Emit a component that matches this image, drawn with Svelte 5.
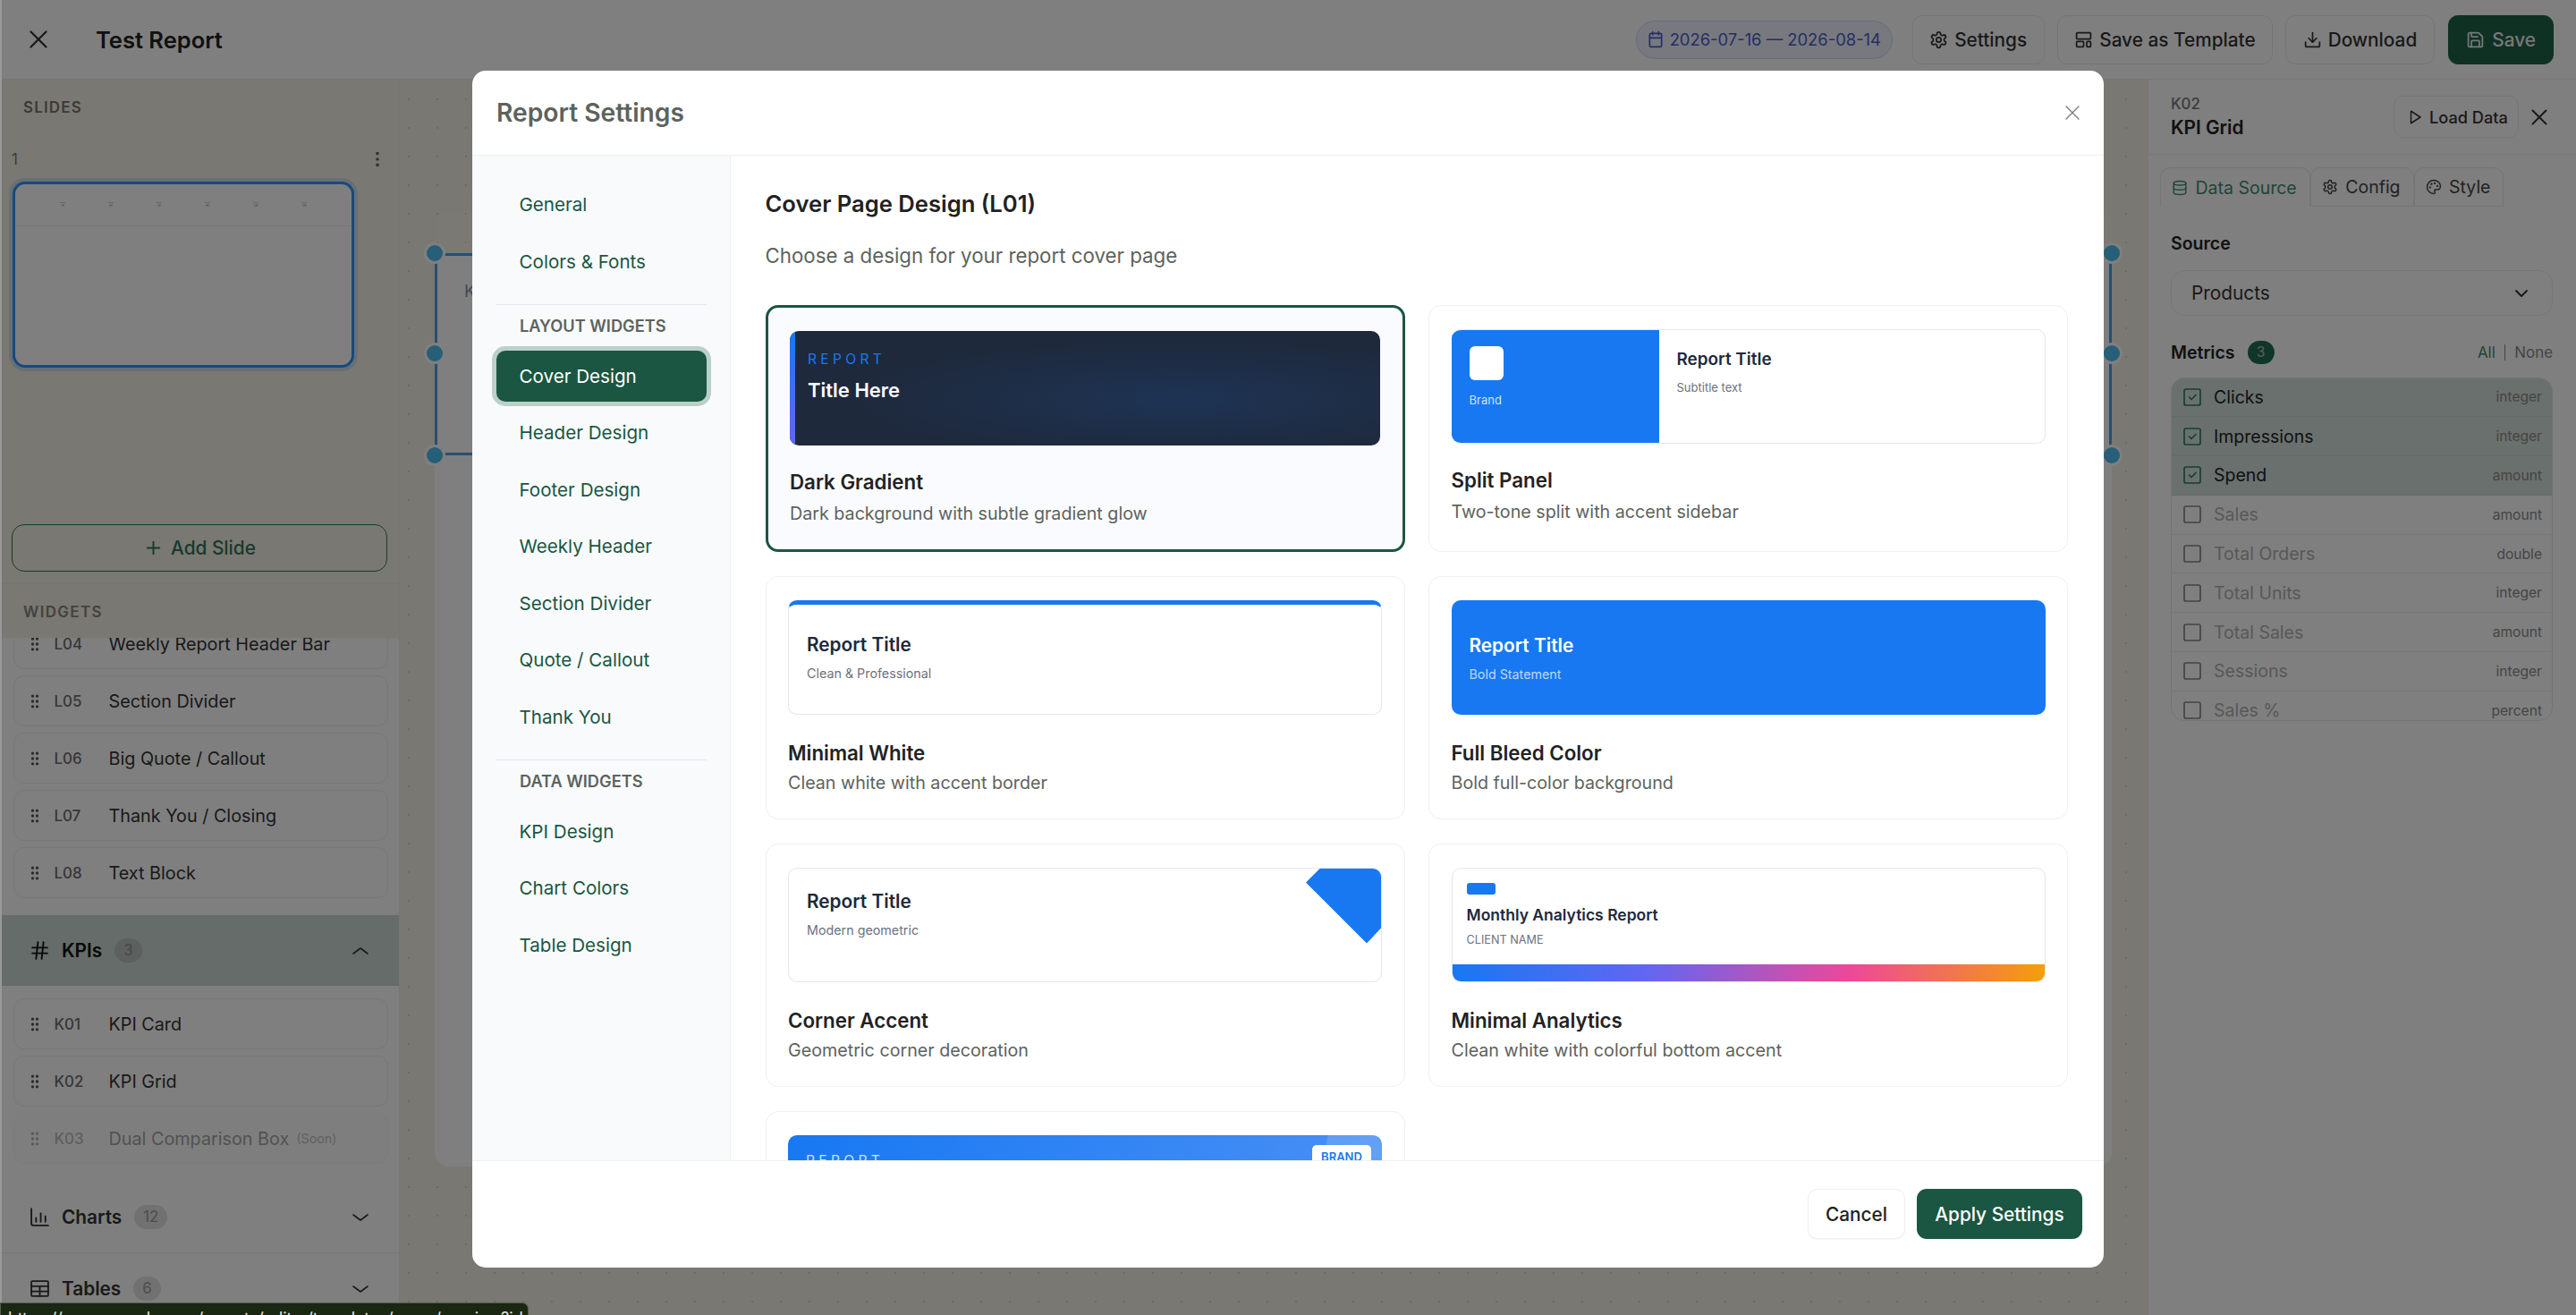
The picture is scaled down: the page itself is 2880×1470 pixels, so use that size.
<script>
  const ic = {
    x: '<path d="M18 6 6 18"/><path d="m6 6 12 12"/>',
    calendar: '<rect x="4" y="4" width="16" height="18" rx="2"/><path d="M16 2v4"/><path d="M8 2v4"/><path d="M4 10h16"/>',
    gear: '<path d="M12.22 2h-.44a2 2 0 0 0-2 2v.18a2 2 0 0 1-1 1.73l-.43.25a2 2 0 0 1-2 0l-.15-.08a2 2 0 0 0-2.73.73l-.22.38a2 2 0 0 0 .73 2.73l.15.1a2 2 0 0 1 1 1.72v.51a2 2 0 0 1-1 1.74l-.15.09a2 2 0 0 0-.73 2.73l.22.38a2 2 0 0 0 2.73.73l.15-.08a2 2 0 0 1 2 0l.43.25a2 2 0 0 1 1 1.73V20a2 2 0 0 0 2 2h.44a2 2 0 0 0 2-2v-.18a2 2 0 0 1 1-1.73l.43-.25a2 2 0 0 1 2 0l.15.08a2 2 0 0 0 2.73-.73l.22-.39a2 2 0 0 0-.73-2.73l-.15-.08a2 2 0 0 1-1-1.74v-.5a2 2 0 0 1 1-1.74l.15-.09a2 2 0 0 0 .73-2.73l-.22-.38a2 2 0 0 0-2.73-.73l-.15.08a2 2 0 0 1-2 0l-.43-.25a2 2 0 0 1-1-1.73V4a2 2 0 0 0-2-2z"/><circle cx="12" cy="12" r="3"/>',
    template: '<rect x="3" y="3" width="18" height="8" rx="1"/><rect x="3" y="14" width="9" height="7" rx="1"/><rect x="16" y="14" width="5" height="7" rx="1"/>',
    download: '<path d="M21 15v4a2 2 0 0 1-2 2H5a2 2 0 0 1-2-2v-4"/><path d="m7 10 5 5 5-5"/><path d="M12 15V3"/>',
    save: '<path d="M15.2 3a2 2 0 0 1 1.4.6l3.8 3.8a2 2 0 0 1 .6 1.4V19a2 2 0 0 1-2 2H5a2 2 0 0 1-2-2V5a2 2 0 0 1 2-2z"/><path d="M17 21v-7a1 1 0 0 0-1-1H8a1 1 0 0 0-1 1v7"/><path d="M7 3v4a1 1 0 0 0 1 1h7"/>',
    play: '<path d="M6 3 20 12 6 21z"/>',
    db: '<ellipse cx="12" cy="5" rx="9" ry="3"/><path d="M3 5v14a9 3 0 0 0 18 0V5"/><path d="M3 12a9 3 0 0 0 18 0"/>',
    palette: '<path d="M12 22a1 1 0 0 1 0-20 10 9 0 0 1 10 9 5 5 0 0 1-5 5h-2.25a1.75 1.75 0 0 0-1.4 2.8l.3.4a1.75 1.75 0 0 1-1.4 2.8z"/><circle cx="13.5" cy="6.5" r=".6" fill="currentColor"/><circle cx="17.5" cy="10.5" r=".6" fill="currentColor"/><circle cx="6.5" cy="12.5" r=".6" fill="currentColor"/><circle cx="8.5" cy="7.5" r=".6" fill="currentColor"/>',
    hash: '<path d="M4 9h16"/><path d="M4 15h16"/><path d="M10 3 8 21"/><path d="M16 3l-2 18"/>',
    chart: '<path d="M3 3v16a2 2 0 0 0 2 2h16"/><path d="M8 17v-4"/><path d="M13 17V8"/><path d="M18 17v-6"/>',
    table: '<rect x="3" y="4" width="18" height="16" rx="1"/><path d="M3 9.5h18"/><path d="M3 15h18"/><path d="M12 9.5V20"/>',
    down: '<path d="m4 9 8 6 8-6"/>',
    up: '<path d="m4 15 8-6 8 6"/>',
    chev: '<path d="m6 9 6 6 6-6"/>',
    check: '<rect x="3" y="3" width="18" height="18" rx="2"/><path d="m8.5 12 2.5 2.5 5-5"/>',
    box: '<rect x="3" y="3" width="18" height="18" rx="2"/>',
    plus: '<path d="M5 12h14"/><path d="M12 5v14"/>',
    more: '<circle cx="12" cy="5" r="1" fill="currentColor"/><circle cx="12" cy="12" r="1" fill="currentColor"/><circle cx="12" cy="19" r="1" fill="currentColor"/>',
    grip: '<circle cx="9" cy="5" r="1" fill="currentColor"/><circle cx="15" cy="5" r="1" fill="currentColor"/><circle cx="9" cy="12" r="1" fill="currentColor"/><circle cx="15" cy="12" r="1" fill="currentColor"/><circle cx="9" cy="19" r="1" fill="currentColor"/><circle cx="15" cy="19" r="1" fill="currentColor"/>'
  };

  const layoutWidgets = [
    ['L05', 'Section Divider'], ['L06', 'Big Quote / Callout'], ['L07', 'Thank You / Closing'], ['L08', 'Text Block']
  ];
  const metrics = [
    ['Clicks', 'integer', true], ['Impressions', 'integer', true], ['Spend', 'amount', true],
    ['Sales', 'amount', false], ['Total Orders', 'double', false], ['Total Units', 'integer', false],
    ['Total Sales', 'amount', false], ['Sessions', 'integer', false], ['Sales %', 'percent', false]
  ];
  const navLayout = ['Cover Design', 'Header Design', 'Footer Design', 'Weekly Header', 'Section Divider', 'Quote / Callout', 'Thank You'];
  const navData = ['KPI Design', 'Chart Colors', 'Table Design'];
</script>

{#snippet icon(name, size, sw = 2)}
  <svg class="i" width={size} height={size} viewBox="0 0 24 24" fill="none" stroke="currentColor" stroke-width={sw} stroke-linecap="round" stroke-linejoin="round">{@html ic[name]}</svg>
{/snippet}

{#snippet widget(code, name, off = false, soon = false)}
  <div class="wi" class:off>
    <span class="grip">{@render icon('grip', 20)}</span>
    <span class="wcode">{code}</span>
    <span class="wname">{name}</span>
    {#if soon}<span class="soon">(Soon)</span>{/if}
  </div>
{/snippet}

<div class="app">
  <header class="top">
    <span class="top-x">{@render icon('x', 34, 1.6)}</span>
    <h1>Test Report</h1>
    <div class="top-actions">
      <div class="date">{@render icon('calendar', 20)}<span>2026-07-16 — 2026-08-14</span></div>
      <div class="tbtn">{@render icon('gear', 21)}<span>Settings</span></div>
      <div class="tbtn">{@render icon('template', 21)}<span>Save as Template</span></div>
      <div class="tbtn">{@render icon('download', 21)}<span>Download</span></div>
      <div class="tbtn primary">{@render icon('save', 21)}<span>Save</span></div>
    </div>
  </header>

  <div class="main">
    <aside class="side">
      <section class="slides">
        <div class="plabel">SLIDES</div>
        <div class="slide-row"><span>1</span><span class="more">{@render icon('more', 22)}</span></div>
        <div class="thumb">
          <div class="thumb-head">
            {#each ['7K', '5K', '3K', '9K', '14K', '12K'] as t}<span class="tk"><i></i>{t}</span>{/each}
          </div>
        </div>
        <div class="add">{@render icon('plus', 23)}<span>Add Slide</span></div>
      </section>
      <div class="wlabel">WIDGETS</div>
      <div class="wlist">
        <div class="wgroup first">
          {@render widget('L04', 'Weekly Report Header Bar')}
          {#each layoutWidgets as w}{@render widget(w[0], w[1])}{/each}
        </div>
        <div class="cat open">
          <span class="cat-i">{@render icon('hash', 25, 1.8)}</span><b>KPIs</b><em>3</em>
          <span class="cat-c">{@render icon('up', 24, 1.6)}</span>
        </div>
        <div class="wgroup kp">
          {@render widget('K01', 'KPI Card')}
          {@render widget('K02', 'KPI Grid')}
          {@render widget('K03', 'Dual Comparison Box', true, true)}
        </div>
        <div class="cat">
          <span class="cat-i">{@render icon('chart', 25, 1.8)}</span><b>Charts</b><em>12</em>
          <span class="cat-c">{@render icon('down', 24, 1.6)}</span>
        </div>
        <div class="cat">
          <span class="cat-i">{@render icon('table', 25, 1.8)}</span><b>Tables</b><em>6</em>
          <span class="cat-c">{@render icon('down', 24, 1.6)}</span>
        </div>
      </div>
    </aside>

    <div class="canvas">
      <div class="page">
        <div class="sel">
          <span class="h tl"></span><span class="h ml"></span><span class="h bl"></span>
          <span class="h tr"></span><span class="h mr"></span><span class="h br"></span>
          <div class="sel-t">KPI Grid</div>
        </div>
      </div>
    </div>

    <aside class="right">
      <div class="r-head">
        <div class="r-t"><small>K02</small><strong>KPI Grid</strong></div>
        <div class="load">{@render icon('play', 18)}<span>Load Data</span></div>
        <span class="r-x">{@render icon('x', 30, 1.6)}</span>
      </div>
      <div class="tabs">
        <div class="tab active">{@render icon('db', 18)}<span>Data Source</span></div>
        <div class="tab">{@render icon('gear', 18)}<span>Config</span></div>
        <div class="tab">{@render icon('palette', 18)}<span>Style</span></div>
      </div>
      <div class="r-body">
        <div class="flabel">Source</div>
        <div class="select"><span>Products</span>{@render icon('chev', 24)}</div>
        <div class="mhead">
          <span class="flabel">Metrics</span><span class="mbadge">3</span>
          <span class="links"><span class="all">All</span><i></i><span>None</span></span>
        </div>
        <div class="mlist">
          {#each metrics as m}
            <div class="mrow" class:on={m[2]}>
              <span class="cb">{@render icon(m[2] ? 'check' : 'box', 24, 1.7)}</span>
              <span class="mname">{m[0]}</span>
              <span class="mtype">{m[1]}</span>
            </div>
          {/each}
        </div>
      </div>
    </aside>
  </div>

  <div class="overlay">
    <div class="modal">
      <div class="m-head">
        <h2>Report Settings</h2>
        <span class="m-x">{@render icon('x', 28, 1.2)}</span>
      </div>
      <div class="m-body">
        <nav class="m-nav">
          <a href="#g">General</a>
          <a href="#c">Colors &amp; Fonts</a>
          <hr />
          <div class="ngroup">LAYOUT WIDGETS</div>
          {#each navLayout as n, i}<a href="#l" class:active={i === 0}>{n}</a>{/each}
          <hr />
          <div class="ngroup">DATA WIDGETS</div>
          {#each navData as n}<a href="#d">{n}</a>{/each}
        </nav>
        <div class="m-main">
          <h3>Cover Page Design (L01)</h3>
          <p class="lead">Choose a design for your report cover page</p>
          <div class="grid">
            <div class="card selected">
              <div class="pv dark"><span class="bar"></span><div class="kick">REPORT</div><div class="dtitle">Title Here</div></div>
              <div class="ct">Dark Gradient</div><div class="cd">Dark background with subtle gradient glow</div>
            </div>
            <div class="card">
              <div class="pv split">
                <div class="sl"><span class="logo"></span><small>Brand</small></div>
                <div class="sr"><div class="rt">Report Title</div><div class="rs">Subtitle text</div></div>
              </div>
              <div class="ct">Split Panel</div><div class="cd">Two-tone split with accent sidebar</div>
            </div>
            <div class="card">
              <div class="pv plain top-accent"><div class="rt big">Report Title</div><div class="rs mid">Clean &amp; Professional</div></div>
              <div class="ct">Minimal White</div><div class="cd">Clean white with accent border</div>
            </div>
            <div class="card">
              <div class="pv full"><div class="rt big">Report Title</div><div class="rs mid">Bold Statement</div></div>
              <div class="ct">Full Bleed Color</div><div class="cd">Bold full-color background</div>
            </div>
            <div class="card">
              <div class="pv plain corner"><span class="gem"></span><div class="rt big">Report Title</div><div class="rs mid">Modern geometric</div></div>
              <div class="ct">Corner Accent</div><div class="cd">Geometric corner decoration</div>
            </div>
            <div class="card">
              <div class="pv analytics">
                <span class="alogo"></span>
                <div class="at">Monthly Analytics Report</div>
                <div class="as">CLIENT NAME</div>
                <span class="rainbow"></span>
              </div>
              <div class="ct">Minimal Analytics</div><div class="cd">Clean white with colorful bottom accent</div>
            </div>
            <div class="card">
              <div class="pv banner"><span class="glow"></span><div class="kick w">REPORT</div><span class="brand">BRAND</span></div>
              <div class="ct">Gradient Banner</div><div class="cd">Bold banner with brand badge</div>
            </div>
          </div>
        </div>
      </div>
      <div class="m-foot">
        <div class="btn cancel">Cancel</div>
        <div class="btn apply">Apply Settings</div>
      </div>
    </div>
  </div>

  <span class="edge"></span>
  <div class="status">https://app.example.com/reports/editor/templates/cover/preview?id=10#slide-1</div>
</div>

<style>
  :global(body) { margin: 0; background: #fff; }
  :global(*) { box-sizing: border-box; }
  .i { display: block; flex: none; }

  .app {
    position: relative;
    width: 2880px;
    height: 1470px;
    overflow: hidden;
    display: flex;
    flex-direction: column;
    font-family: Inter, "Liberation Sans", sans-serif;
    color: #222;
    background: #fff;
  }

  .top {
    height: 89px;
    flex: none;
    display: flex;
    align-items: center;
    border-bottom: 1px solid #ececec;
    padding: 0 25px 0 26px;
  }
  .top-x { color: #333; margin-right: 47px; }
  .top h1 { margin: 0; font-size: 25.5px; font-weight: 600; color: #222; }
  .top-actions { margin-left: auto; display: flex; align-items: center; gap: 14px; }
  .date {
    height: 43px; width: 287px; margin-right: 8px;
    display: flex; align-items: center; gap: 6px; padding-left: 11px;
    border: 1.5px solid #cdd8f8; border-radius: 22px;
    background: #eef3ff; color: #4c5cc9; font-size: 18.4px;
    white-space: nowrap;
  }
  .tbtn {
    height: 55px; display: flex; align-items: center; gap: 7px; padding: 0 18.5px;
    border: 1.5px solid #eceae6; border-radius: 11px; background: #fff;
    font-size: 20.8px; font-weight: 500; color: #333; white-space: nowrap;
  }
  .tbtn.primary { background: #1c6349; border-color: #1c6349; color: #eee; gap: 8px; padding: 0 19px; margin-left: 1.5px; }

  .main { flex: 1; min-height: 0; display: flex; }

  .side {
    width: 447px; flex: none; padding-left: 2px;
    display: flex; flex-direction: column;
    background: #f4f0e4;
    border-right: 1px solid #efece2;
  }
  .slides {
    height: 564px; flex: none; display: flex; flex-direction: column;
    border-bottom: 1px solid #ebe8dd; padding-bottom: 13px;
  }
  .plabel { margin: 21px 0 0 24px; font-size: 16.9px; font-weight: 600; letter-spacing: 1.2px; line-height: 20px; color: #757570; }
  .slide-row {
    display: flex; align-items: center; justify-content: space-between;
    margin: 38px 0 0 11px; padding-right: 13px; height: 20px;
    font-size: 16.9px; color: #777;
  }
  .more { color: #666; }
  .thumb {
    width: 382px; height: 208px; margin: 15px 0 0 12px;
    border: 3px solid #2c94ff; border-radius: 14px; background: #fff;
    box-shadow: 0 0 0 4px rgba(44, 148, 255, .18);
  }
  .thumb-head { height: 47px; border-bottom: 1px solid #f0f0f0; display: flex; justify-content: space-around; align-items: center; padding: 0 26px; }
  .tk { font-size: 3px; color: #8890a8; display: flex; flex-direction: column; align-items: center; gap: 1px; }
  .tk i { width: 6px; height: 1px; background: #ccd; display: block; }
  .add {
    margin: auto 0 0 11px; width: 420px; height: 53px;
    display: flex; align-items: center; justify-content: center; gap: 8px;
    border: 1.5px solid #30755e; border-radius: 14px; color: #30755e;
    font-size: 20.8px; font-weight: 500;
  }
  .wlabel {
    height: 60px; flex: none; padding: 21px 0 0 24px;
    font-size: 16.9px; line-height: 20px; font-weight: 600; letter-spacing: 1.4px; color: #86867f;
  }
  .wlist { flex: 1; min-height: 0; overflow: hidden; background: #fff; margin-left: -2px; padding-left: 2px; }
  .wgroup { display: flex; flex-direction: column; gap: 7px; padding: 0 12.5px; }
  .wgroup.first { margin-top: -22px; padding-bottom: 19px; }
  .wgroup.kp { padding-top: 14px; padding-bottom: 20px; }
  .wi {
    height: 57px; display: flex; align-items: center; flex: none;
    border: 1.5px solid #eeeeee; border-radius: 12px;
  }
  .grip { width: 45px; padding-left: 13px; color: #555; }
  .wcode { width: 61px; font-size: 16.9px; font-weight: 500; color: #6e6e6e; }
  .wname { font-size: 19.8px; color: #333; }
  .soon { font-size: 14.3px; color: #777; margin-left: 8px; }
  .wi.off { opacity: .45; background: #fafafa; }
  .cat {
    height: 80px; display: flex; align-items: center; padding-left: 30px;
    border-bottom: 1.5px solid #efefef;
  }
  .cat.open { height: 79px; background: #cad8d2; border-bottom: 0; color: #111; }
  .cat-i { width: 37px; color: #333; }
  .cat b { font-size: 20.8px; font-weight: 600; color: #333; }
  .cat.open b { color: #111; }
  .cat.open .cat-i { color: #111; }
  .cat em {
    margin-left: 14px; padding: 0 10px; height: 27px; line-height: 27px; border-radius: 14px;
    background: #e2e2e2; font-style: normal; font-size: 16.9px; color: #999;
  }
  .cat.open em { background: #b8c0bc; color: #8a908d; }
  .cat-c { margin-left: auto; margin-right: 31px; color: #333; }

  .canvas {
    flex: 1; min-width: 0; padding: 146px 0 0 39px;
    background-color: #f4f0e4;
    background-image: radial-gradient(circle, #d8d5ca 1px, transparent 1.5px);
    background-size: 32px 32px;
    background-position: -6px 6px;
  }
  .page {
    width: 1875px; height: 1069px; border-radius: 16px; padding-top: 48px;
    background: linear-gradient(180deg, rgba(255, 255, 255, .2) 48px, #fff 48px);
  }
  .sel { position: relative; height: 226px; border: 3px solid #4f9fe0; padding: 28px 30px; }
  .sel-t { font-size: 19px; color: #8890a0; }
  .h { position: absolute; width: 18px; height: 18px; border-radius: 50%; background: #4fbcf0; box-shadow: 0 0 0 3px #fff; }
  .tl { left: -12px; top: -12px; } .ml { left: -12px; top: 100px; } .bl { left: -12px; bottom: -12px; }
  .tr { right: -12px; top: -12px; } .mr { right: -12px; top: 100px; } .br { right: -12px; bottom: -12px; }

  .right { width: 479px; flex: none; background: #fff; border-left: 1px solid #eee; }
  .r-head { height: 84px; display: flex; align-items: center; padding: 0 26px 0 25px; border-bottom: 1px solid #eee; }
  .r-t { display: flex; flex-direction: column; gap: 4px; margin-right: auto; }
  .r-t small { font-size: 16.9px; font-weight: 500; color: #777; line-height: 20px; }
  .r-t strong { font-size: 20.8px; font-weight: 600; color: #222; line-height: 26px; }
  .load {
    width: 140px; height: 47px; display: flex; align-items: center; gap: 7px; padding-left: 14px;
    border: 1.5px solid #ececec; border-radius: 11px; font-size: 18.2px; font-weight: 500; color: #333; white-space: nowrap;
  }
  .r-x { margin-left: 8px; color: #333; }
  .tabs { display: flex; padding: 14px 0 0 13px; height: 58px; }
  .tab {
    display: flex; align-items: center; gap: 8.5px; padding: 0 14px 0 12px;
    border: 1.5px solid #eaeaea; border-radius: 11px 11px 0 0; font-size: 19.5px; color: #444;
  }
  .tab.active { border-bottom: 0; color: #3e8a70; }
  .r-body { padding: 29px 26px 0 25px; }
  .flabel { font-size: 19.5px; font-weight: 600; color: #222; line-height: 24px; }
  .select {
    margin-top: 18px; height: 51px; display: flex; align-items: center; justify-content: space-between;
    padding: 0 22px; border: 1.5px solid #ececec; border-radius: 15px; font-size: 20.8px; color: #333;
  }
  .mhead { display: flex; align-items: center; margin-top: 28px; height: 26px; }
  .mbadge { margin-left: 14px; width: 30px; height: 26px; line-height: 26px; border-radius: 13px; text-align: center; background: #216d53; color: #bbb; font-size: 15.6px; }
  .links { margin-left: auto; display: flex; align-items: center; gap: 10px; font-size: 16.9px; color: #8a8a8a; }
  .links .all { color: #3d8a70; }
  .links i { width: 1.5px; height: 18px; background: #888; display: block; }
  .mlist { margin-top: 14.5px; height: 384px; overflow: hidden; border: 1.5px solid #e8e8e8; border-radius: 15px; }
  .mrow { height: 43.8px; display: flex; align-items: center; padding: 0 11px; border-bottom: 1px solid #eee; color: #b0b0b0; }
  .mrow.on { background: #d4e0dc; color: #222; border-bottom-color: #c9d6d1; }
  .cb { width: 36px; color: #888; }
  .mrow.on .cb { color: #2a7f63; }
  .mname { font-size: 19.5px; color: inherit; }
  .mtype { margin-left: auto; font-size: 15.6px; color: #8a8a8a; }

  .overlay {
    position: absolute; inset: 0; padding-top: 79px;
    display: flex; justify-content: center; align-items: flex-start;
    background: rgba(0, 0, 0, .5);
  }
  .modal {
    width: 1824px; height: 1338px; background: #fff; border-radius: 15px; overflow: hidden;
    display: flex; flex-direction: column;
  }
  .m-head { height: 95px; flex: none; display: flex; align-items: center; justify-content: space-between; padding: 0 21px 0 27px; border-bottom: 1.5px solid #eeeff1; }
  .m-head h2 { margin: 0; font-size: 28.2px; font-weight: 600; color: #5d635c; }
  .m-x { color: #7b7b7b; }
  .m-body { flex: 1; min-height: 0; display: flex; }
  .m-nav { width: 289px; flex: none; background: #f8fafc; border-right: 1.5px solid #eeeff1; padding: 26px 26px 0 27px; display: flex; flex-direction: column; gap: 6.5px; }
  .m-nav a {
    height: 57px; flex: none; display: flex; align-items: center; padding-left: 25.5px; border-radius: 10px;
    font-size: 20.6px; color: #1a5641; text-decoration: none;
  }
  .m-nav a.active { background: #1a5641; color: #fff; box-shadow: 0 0 0 5px #bccfc9; }
  .m-nav hr { margin: 13px 0 0; border: 0; border-top: 1.5px solid #e6e8ec; width: 100%; }
  .ngroup { height: 37.5px; padding: 3.5px 0 0 26px; font-size: 18.2px; line-height: 26px; font-weight: 600; color: #5d635c; flex: none; }
  .m-main { flex: 1; min-width: 0; overflow: hidden; padding: 36px 40px 0 38.5px; }
  .m-main h3 { margin: 0; font-size: 25.6px; font-weight: 600; line-height: 36px; color: #222; }
  .lead { margin: 22px 0 37px; font-size: 22.3px; line-height: 36px; color: #5d635c; }
  .grid { display: grid; grid-template-columns: 1fr 1fr; gap: 27px 26.5px; }
  .card { border: 1.5px solid #eeeff1; border-radius: 14px; padding: 25.5px 24.5px; background: #fff; }
  .card.selected { border: 3.5px solid #1a5641; background: #fafbff; }
  .ct { margin-top: 27px; font-size: 22.3px; font-weight: 600; line-height: 32px; color: #222; }
  .cd { margin-top: 3px; font-size: 19.7px; line-height: 29px; color: #5d635c; }
  .card:nth-child(-n+2) .ct { margin-top: 25px; }
  .card:nth-child(-n+2) .cd { margin-top: 5px; }

  .pv { position: relative; height: 128px; border-radius: 10px; overflow: hidden; display: flex; flex-direction: column; }
  .rt { font-size: 18.9px; font-weight: 600; color: #1e293b; line-height: 26px; }
  .rs { margin-top: 8px; font-size: 13px; line-height: 20px; color: #6b7280; }
  .rt.big { font-size: 20.8px; }
  .rs.mid { font-size: 14.3px; margin-top: 9px; }

  .dark { background: radial-gradient(ellipse at 66% 60%, #1e3354 0%, #1e293b 62%); padding: 20px 0 0 20px; }
  .bar { position: absolute; left: 0; top: 0; bottom: 0; width: 6px; background: linear-gradient(180deg, #1778f2, #6366f1); }
  .kick { font-size: 15.6px; line-height: 24px; letter-spacing: 4.3px; color: #1778f2; }
  .dtitle { margin-top: 8px; font-size: 22px; font-weight: 600; line-height: 28px; color: #fff; }

  .split { flex-direction: row; border: 1.5px solid #e5e7eb; border-left: 0; }
  .sl { width: 232px; margin: -1.5px 0; background: #1778f2; padding: 20px; }
  .logo { display: block; width: 38px; height: 38px; border-radius: 6px; background: #fff; }
  .sl small { display: block; margin-top: 13px; font-size: 13px; line-height: 18px; color: rgba(255, 255, 255, .8); }
  .sr { padding: 20px; }
  .sr .rt { line-height: 26px; }

  .plain { border: 1.5px solid #e5e7eb; padding: 0 0 0 20px; }
  .plain .rt { margin-top: 24px; }
  .plain.top-accent { border-top: 5px solid #1778f2; }
  .plain.top-accent .rt { margin-top: 32px; }
  .full { background: #1778f2; padding-left: 20px; }
  .full .rt { color: #fff; margin-top: 38px; }
  .full .rs { color: rgba(255, 255, 255, .72); margin-top: 9px; }
  .gem { position: absolute; right: 0; top: 0; width: 84px; height: 84px; background: #1778f2; clip-path: polygon(0 16px, 16px 0, 100% 0, 100% 67px, 68px 100%); }

  .analytics { border: 1.5px solid #e5e7eb; padding: 16px 0 0 16px; }
  .alogo { display: block; width: 32px; height: 13px; border-radius: 3px; background: #1778f2; }
  .at { margin-top: 11px; font-size: 17.5px; font-weight: 600; line-height: 24px; color: #1e293b; }
  .as { margin-top: 6px; font-size: 12.7px; line-height: 20px; color: #6b7280; }
  .rainbow { position: absolute; left: 0; right: 0; bottom: 0; height: 19px; background: linear-gradient(90deg, #1778f2 0%, #6366f1 33%, #ec4899 67%, #f59e0b 100%); }

  .banner { background: linear-gradient(100deg, #1778f2, #4a90f5); padding: 17px 0 0 20px; }
  .kick.w { color: #cfe0fb; }
  .glow { position: absolute; right: -22px; top: -30px; width: 84px; height: 84px; border-radius: 50%; background: rgba(255, 255, 255, .15); }
  .brand { position: absolute; right: 12px; top: 11px; width: 66px; height: 30px; border-radius: 5px; background: #fff; color: #1778f2; font-size: 13px; font-weight: 600; text-align: center; line-height: 26px; }

  .m-foot { height: 120px; flex: none; display: flex; align-items: center; justify-content: flex-end; gap: 13px; padding: 0 24px 1px 0; border-top: 1.5px solid #eeeff1; }
  .btn { height: 56px; display: flex; align-items: center; justify-content: center; border-radius: 11px; font-size: 20.8px; font-weight: 500; }
  .cancel { width: 109px; background: #fff; border: 1.5px solid #eeeff1; color: #222; box-shadow: 0 1px 2px rgba(0, 0, 0, .04); }
  .apply { width: 185px; background: #1a5641; color: #fff; }

  .edge { position: absolute; left: 0; top: 0; bottom: 0; width: 2px; background: #999; }
  .status {
    position: absolute; left: 0; bottom: 0; width: 591px; height: 14px; overflow: hidden;
    background: #1a2713; border: 1px solid #55604c; border-bottom: 0; border-radius: 0 7px 0 0;
    color: #e8e8e8; font-size: 18px; line-height: 34px; padding-left: 8px; white-space: nowrap;
  }
</style>
